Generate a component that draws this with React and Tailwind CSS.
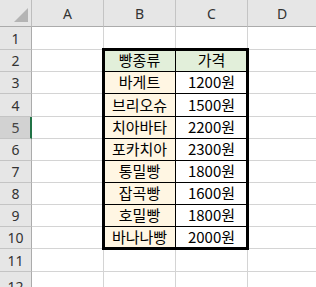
import React from "react";

const COLS = ["A", "B", "C", "D"];
// Row heights include the 1px bottom gridline
const ROW_HEIGHTS = [23, 22, 22, 23, 22, 22, 22, 22, 22, 22, 23, 30];

const breads = [
  ["바게트", "1200원"],
  ["브리오슈", "1500원"],
  ["치아바타", "2200원"],
  ["포카치아", "2300원"],
  ["통밀빵", "1800원"],
  ["잡곡빵", "1600원"],
  ["호밀빵", "1800원"],
  ["바나나빵", "2000원"],
];

const kr = { fontFamily: '"Noto Sans CJK KR", "Noto Sans", sans-serif' };
const ui = { fontFamily: '"Noto Sans", "Liberation Sans", sans-serif' };

function Corner() {
  return (
    <div className="w-[32px] h-full shrink-0 border-r border-b border-r-[#bdbdbd] border-b-[#ababab] bg-[#e6e6e6] flex items-end justify-end pr-[3px] pb-[4px]">
      <svg width="14" height="14" viewBox="0 0 14 14">
        <polygon points="14,0 14,14 0,14" fill="#b4b4b4" />
      </svg>
    </div>
  );
}

function cellFor(r, c) {
  // r: 1-based row, c: column index 0..3
  if (r === 2 && c === 1) return { text: "빵종류", bg: "bg-[#e2efda]", table: true };
  if (r === 2 && c === 2) return { text: "가격", bg: "bg-[#e2efda]", table: true };
  if (r >= 3 && r <= 10 && c === 1)
    return { text: breads[r - 3][0], bg: "bg-[#fff6e3]", table: true };
  if (r >= 3 && r <= 10 && c === 2)
    return { text: breads[r - 3][1], bg: "bg-white", table: true };
  return null;
}

export default function App() {
  return (
    <div className="relative w-[316px] h-[287px] overflow-hidden bg-white select-none">
      {/* column header strip */}
      <div className="flex h-[27px]">
        <Corner />
        {COLS.map((c, i) => (
          <div
            key={c}
            style={ui}
            className={`${i < 3 ? "w-[72px] shrink-0" : "flex-1"} h-full bg-[#e6e6e6] border-b border-b-[#ababab] ${i < 3 ? "border-r border-r-[#c4c4c4]" : ""} flex items-center justify-center text-[14px] text-[#333]`}
          >
            {c}
          </div>
        ))}
      </div>

      {ROW_HEIGHTS.map((h, idx) => {
        const r = idx + 1;
        const selected = r === 5;
        return (
          <div key={r} className="flex" style={{ height: h }}>
            <div
              style={ui}
              className={`w-[32px] shrink-0 h-full flex items-center justify-center text-[14px] border-b border-b-[#c4c4c4] ${
                selected
                  ? "bg-[#d2d2d2] text-[#444] border-r-2 border-r-[#217346] pl-[1px]"
                  : "bg-[#e6e6e6] text-[#333] border-r border-r-[#ababab]"
              }`}
            >
              {r}
            </div>
            {COLS.map((col, c) => {
              const cell = cellFor(r, c);
              const w = c < 3 ? "w-[72px] shrink-0" : "flex-1";
              if (cell) {
                return (
                  <div
                    key={col}
                    style={kr}
                    className={`${w} h-full ${cell.bg} border-r border-b border-black flex items-center justify-center text-[15px] text-black`}
                  >
                    {cell.text}
                  </div>
                );
              }
              return (
                <div
                  key={col}
                  className={`${w} h-full border-b border-b-[#d4d4d4] ${c < 3 ? "border-r border-r-[#d4d4d4]" : ""}`}
                />
              );
            })}
          </div>
        );
      })}

      {/* thick outline around the price table B2:C10 */}
      <div className="absolute left-[102px] top-[48px] w-[147px] h-[202px] border-[3px] border-black pointer-events-none" />
    </div>
  );
}
